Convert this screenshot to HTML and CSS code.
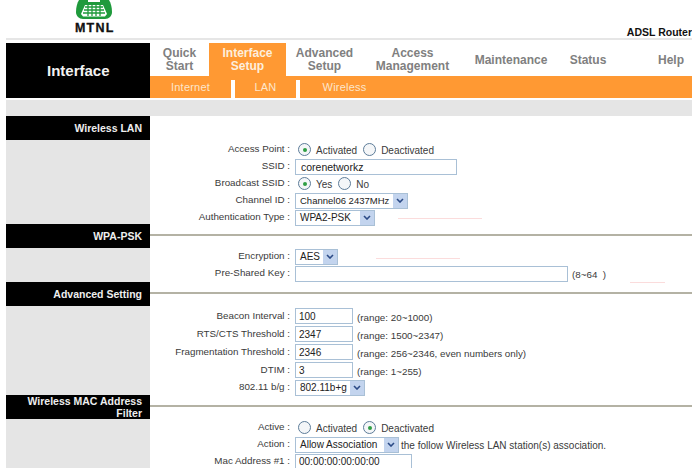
FILE: index.html
```html
<!DOCTYPE html>
<html lang="en">
<head>
    <meta charset="UTF-8">
    <meta name="viewport" content="width=device-width, initial-scale=1.0">
    <title>ADSL Router - Interface Setup</title>
    <link rel="stylesheet" href="styles.css">
</head>
<body>

<div class="page">
    <!-- Logo and model name -->
    <div class="header">
        <div class="logo">
            <svg class="logo-icon" width="36" height="20" viewBox="0 0 36 20">
                <path d="M3 0 L33 0 C35 3 36 8 36 12 C36 16 33 19 29 19 L7 19 C3 19 0 16 0 12 C0 8 1 3 3 0 Z" fill="#1f9a3c"/>
                <path d="M12 0 H24 L24 2 H12 Z" fill="#ffffff"/>
                <path d="M5 14 L9 5 L27 5 L31 14 L29 16.500 L7 16.500 Z" fill="#ffffff"/>
                <path d="M9 7 H27 M8 10 H28 M7 13 H29 M12 4 V16 M16 4 V16 M20 4 V16 M24 4 V16" stroke="#1f9a3c" stroke-width="1.3" fill="none"/>
            </svg>
            <span class="logo-text">MTNL</span>
        </div>
        <span class="model">ADSL Router</span>
    </div>

    <!-- Main menu -->
    <div class="nav">
        <div class="nav-title">Interface</div>
        <div class="nav-menu">
            <div class="tabs">
                <div class="tab tab-quick">Quick<br>Start</div>
                <div class="tab tab-wide active">Interface<br>Setup</div>
                <div class="tab tab-wide">Advanced<br>Setup</div>
                <div class="tab tab-access">Access<br>Management</div>
                <div class="tab tab-maint">Maintenance</div>
                <div class="tab tab-status">Status</div>
                <div class="tab tab-help">Help</div>
            </div>
            <div class="subnav">
                <div class="sub sub-internet">Internet</div>
                <div class="sub sub-lan">LAN</div>
                <div class="sub sub-wireless">Wireless</div>
            </div>
        </div>
    </div>

    <div class="strip"></div>

    <!-- Wireless LAN -->
    <div class="section">
        <div class="sec-head">Wireless LAN</div>
        <div class="sec-rule sec-rule-none"></div>
        <div class="sec-side"></div>
        <div class="sec-body body-wlan">
            <div class="row">
                <label class="lbl">Access Point :</label>
                <input class="radio" type="radio" name="ap" checked><span class="opt">Activated</span>
                <input class="radio" type="radio" name="ap"><span class="opt">Deactivated</span>
            </div>
            <div class="row">
                <label class="lbl">SSID :</label>
                <input class="text text-ssid" type="text" value="corenetworkz">
            </div>
            <div class="row">
                <label class="lbl">Broadcast SSID :</label>
                <input class="radio" type="radio" name="bc" checked><span class="opt">Yes</span>
                <input class="radio" type="radio" name="bc"><span class="opt">No</span>
            </div>
            <div class="row">
                <label class="lbl">Channel ID :</label>
                <div class="select select-channel"><span class="select-val">Channel06 2437MHz</span><span class="arrow"><svg width="8" height="5" viewBox="0 0 8 5"><path d="M1 1 L4 4 L7 1" stroke="#2b4a86" stroke-width="1.6" fill="none"/></svg></span></div>
            </div>
            <div class="row">
                <label class="lbl">Authentication Type :</label>
                <div class="select select-auth"><span class="select-val">WPA2-PSK</span><span class="arrow"><svg width="8" height="5" viewBox="0 0 8 5"><path d="M1 1 L4 4 L7 1" stroke="#2b4a86" stroke-width="1.6" fill="none"/></svg></span></div>
            </div>
        </div>
    </div>

    <!-- WPA-PSK -->
    <div class="section">
        <div class="sec-head">WPA-PSK</div>
        <div class="sec-rule"></div>
        <div class="sec-side"></div>
        <div class="sec-body body-wpa">
            <div class="row">
                <label class="lbl">Encryption :</label>
                <div class="select select-aes"><span class="select-val">AES</span><span class="arrow"><svg width="8" height="5" viewBox="0 0 8 5"><path d="M1 1 L4 4 L7 1" stroke="#2b4a86" stroke-width="1.6" fill="none"/></svg></span></div>
            </div>
            <div class="row">
                <label class="lbl">Pre-Shared Key :</label>
                <input class="text text-psk" type="text">
                <span class="hint">(8~64 &nbsp;)</span>
            </div>
        </div>
    </div>

    <!-- Advanced Setting -->
    <div class="section">
        <div class="sec-head">Advanced Setting</div>
        <div class="sec-rule"></div>
        <div class="sec-side"></div>
        <div class="sec-body body-adv">
            <div class="row row-adv">
                <label class="lbl">Beacon Interval :</label>
                <input class="text text-num" type="text" value="100">
                <span class="hint">(range: 20~1000)</span>
            </div>
            <div class="row row-adv">
                <label class="lbl">RTS/CTS Threshold :</label>
                <input class="text text-num" type="text" value="2347">
                <span class="hint">(range: 1500~2347)</span>
            </div>
            <div class="row row-adv">
                <label class="lbl">Fragmentation Threshold :</label>
                <input class="text text-num" type="text" value="2346">
                <span class="hint">(range: 256~2346, even numbers only)</span>
            </div>
            <div class="row row-adv">
                <label class="lbl">DTIM :</label>
                <input class="text text-num" type="text" value="3">
                <span class="hint">(range: 1~255)</span>
            </div>
            <div class="row">
                <label class="lbl">802.11 b/g :</label>
                <div class="select select-bg"><span class="select-val">802.11b+g</span><span class="arrow"><svg width="8" height="5" viewBox="0 0 8 5"><path d="M1 1 L4 4 L7 1" stroke="#2b4a86" stroke-width="1.6" fill="none"/></svg></span></div>
            </div>
        </div>
    </div>

    <!-- Wireless MAC Address Filter -->
    <div class="section">
        <div class="sec-head">Wireless MAC Address Filter</div>
        <div class="sec-rule"></div>
        <div class="sec-side"></div>
        <div class="sec-body body-mac">
            <div class="row">
                <label class="lbl">Active :</label>
                <input class="radio" type="radio" name="mac"><span class="opt">Activated</span>
                <input class="radio" type="radio" name="mac" checked><span class="opt">Deactivated</span>
            </div>
            <div class="row">
                <label class="lbl">Action :</label>
                <div class="select select-action"><span class="select-val">Allow Association</span><span class="arrow"><svg width="8" height="5" viewBox="0 0 8 5"><path d="M1 1 L4 4 L7 1" stroke="#2b4a86" stroke-width="1.6" fill="none"/></svg></span></div>
                <span class="hint hint-action">the follow Wireless LAN station(s) association.</span>
            </div>
            <div class="row">
                <label class="lbl">Mac Address #1 :</label>
                <input class="text text-mac" type="text" value="00:00:00:00:00:00">
            </div>
        </div>
    </div>

    <!-- Faint marks left on the original capture -->
    <div class="mark mark-auth"></div>
    <div class="mark mark-enc"></div>
    <div class="mark mark-psk"></div>
</div>

</body>
</html>
```

FILE: styles.css
```css
/* Global Styles */
html, body {
    margin: 0;
    padding: 0;
    background: #ffffff;
}

body {
    font-family: 'Liberation Sans', Arial, sans-serif;
    font-size: 10px;
    color: #333333;
}

.page {
    position: relative;
    height: 468px;
    margin: 0 4px 0 6px;
    overflow: hidden;
}

/* Header */
.header {
    height: 38px;
    display: flex;
    justify-content: space-between;
    align-items: flex-end;
    border-bottom: 2px solid #e6e6e6;
    margin-bottom: 3px;
}

.logo {
    margin-left: 69px;
    width: 42px;
    height: 33px;
    align-self: flex-start;
    display: flex;
    flex-direction: column;
    align-items: flex-start;
}

.logo-icon {
    display: block;
    margin-left: 1px;
}

.logo-text {
    margin-top: 3px;
    font-size: 12.5px;
    line-height: 10px;
    font-weight: bold;
    letter-spacing: 1.2px;
    color: #111111;
    -webkit-text-stroke: 0.3px #111111;
}

.model {
    font-size: 10.5px;
    line-height: 12px;
    font-weight: bold;
    color: #111111;
}

/* Main menu */
.nav {
    display: flex;
    height: 55px;
}

.nav-title {
    width: 144px;
    background: #000000;
    color: #f2f2f2;
    font-size: 15px;
    font-weight: bold;
    line-height: 55px;
    padding-left: 41px;
    box-sizing: border-box;
}

.nav-menu {
    flex: 1;
    display: flex;
    flex-direction: column;
}

.tabs {
    height: 33px;
    display: flex;
}

.tab {
    font-size: 12px;
    line-height: 13px;
    font-weight: bold;
    color: #808080;
    text-align: center;
    display: flex;
    align-items: center;
    justify-content: center;
    padding-top: 1px;
    box-sizing: border-box;
}

.tab.active {
    background: #ff9933;
    color: #fdeedd;
}

.tab-quick { width: 59px; }
.tab-wide { width: 77px; }
.tab-access { width: 99px; }
.tab-maint { width: 98px; }
.tab-status { width: 56px; }
.tab-help { width: 42px; margin-left: auto; }

.subnav {
    height: 22px;
    display: flex;
    background: #ff9933;
}

.sub {
    font-size: 11px;
    line-height: 22px;
    letter-spacing: 0.2px;
    color: #fde6cc;
    text-align: center;
    box-sizing: border-box;
    position: relative;
}

.sub-internet { width: 81px; }
.sub-lan { width: 69px; padding-right: 4px; padding-left: 4px; }
.sub-wireless { width: 89px; }

.sub-lan::before,
.sub-lan::after {
    content: '';
    position: absolute;
    top: 4px;
    bottom: 0;
    width: 4px;
    background: #ffffff;
}

.sub-lan::before { left: 0; }
.sub-lan::after { right: 0; }

.strip {
    height: 16px;
    margin-top: 2px;
    background: #e5e5e5;
}

/* Sections */
.section {
    display: grid;
    grid-template-columns: 144px 1fr;
    grid-template-rows: 24px auto;
}

.sec-head {
    background: #000000;
    color: #eeeeee;
    font-size: 10.5px;
    line-height: 12px;
    font-weight: bold;
    text-align: right;
    padding-right: 8px;
    display: flex;
    align-items: center;
    justify-content: flex-end;
}

.sec-rule {
    height: 2px;
    margin-top: 10px;
    background: #b4b2a4;
}

.sec-rule-none {
    background: none;
}

.sec-side {
    background: #e5e5e5;
}

.body-wlan { height: 84px; padding-top: 1px; box-sizing: border-box; }
.body-wpa { height: 34px; }
.body-adv { height: 89px; padding-top: 1px; box-sizing: border-box; }
.body-mac { height: 60px; box-sizing: border-box; }

/* Form rows */
.row {
    display: flex;
    align-items: center;
    height: 17px;
}

.row-adv {
    height: 18px;
}

.lbl {
    width: 142px;
    padding-right: 2px;
    margin-bottom: 2px;
    box-sizing: border-box;
    font-size: 9.8px;
    text-align: right;
    white-space: nowrap;
    flex: none;
    color: #3a3a3a;
}

.opt {
    margin-top: 2px;
    color: #3a3a3a;
}

.hint {
    margin-left: 4px;
    margin-top: 2px;
    color: #3a3a3a;
    white-space: nowrap;
    font-size: 9.8px;
}

.hint-action {
    margin-left: 2px;
    font-size: 10px;
}

/* Inputs */
.radio {
    appearance: none;
    -webkit-appearance: none;
    width: 13px;
    height: 13px;
    margin: 0 5px 0 6px;
    border: 1px solid #5d7c99;
    border-radius: 50%;
    background: #f4f6f8;
    position: relative;
    flex: none;
}

.radio:checked::before {
    content: '';
    position: absolute;
    left: 3.5px;
    top: 3.5px;
    width: 4px;
    height: 4px;
    border-radius: 50%;
    background: #2f9e44;
}

.text {
    box-sizing: border-box;
    height: 16px;
    margin: 0 0 0 3px;
    padding: 0 3px;
    border: 1px solid #a9c0d6;
    background: #ffffff;
    font-family: 'Liberation Sans', Arial, sans-serif;
    font-size: 10px;
    color: #222222;
    outline: none;
    flex: none;
}

.text-ssid { width: 162px; padding-left: 5px; font-size: 10.5px; }
.text-psk { width: 273px; }
.text-num { width: 58px; }
.text-mac { width: 117px; }

.select {
    box-sizing: border-box;
    height: 16px;
    margin-left: 3px;
    border: 1px solid #a9c0d6;
    background: #ffffff;
    display: flex;
    align-items: center;
    justify-content: space-between;
    padding-left: 4px;
    flex: none;
}

.select-val {
    white-space: nowrap;
    color: #222222;
}

.arrow {
    width: 14px;
    height: 14px;
    background: #c3d4ee;
    display: flex;
    align-items: center;
    justify-content: center;
    flex: none;
}

.select-channel { width: 113px; font-size: 9.5px; }
.select-auth { width: 80px; }
.select-aes { width: 43px; }
.select-bg { width: 70px; }
.select-action { width: 104px; }

/* Faint pink marks */
.mark {
    position: absolute;
    height: 1px;
    background: #fbdcdc;
}

.mark-auth { left: 392px; top: 218px; width: 84px; }
.mark-enc { left: 370px; top: 258px; width: 84px; }
.mark-psk { left: 624px; top: 282px; width: 35px; }
```
